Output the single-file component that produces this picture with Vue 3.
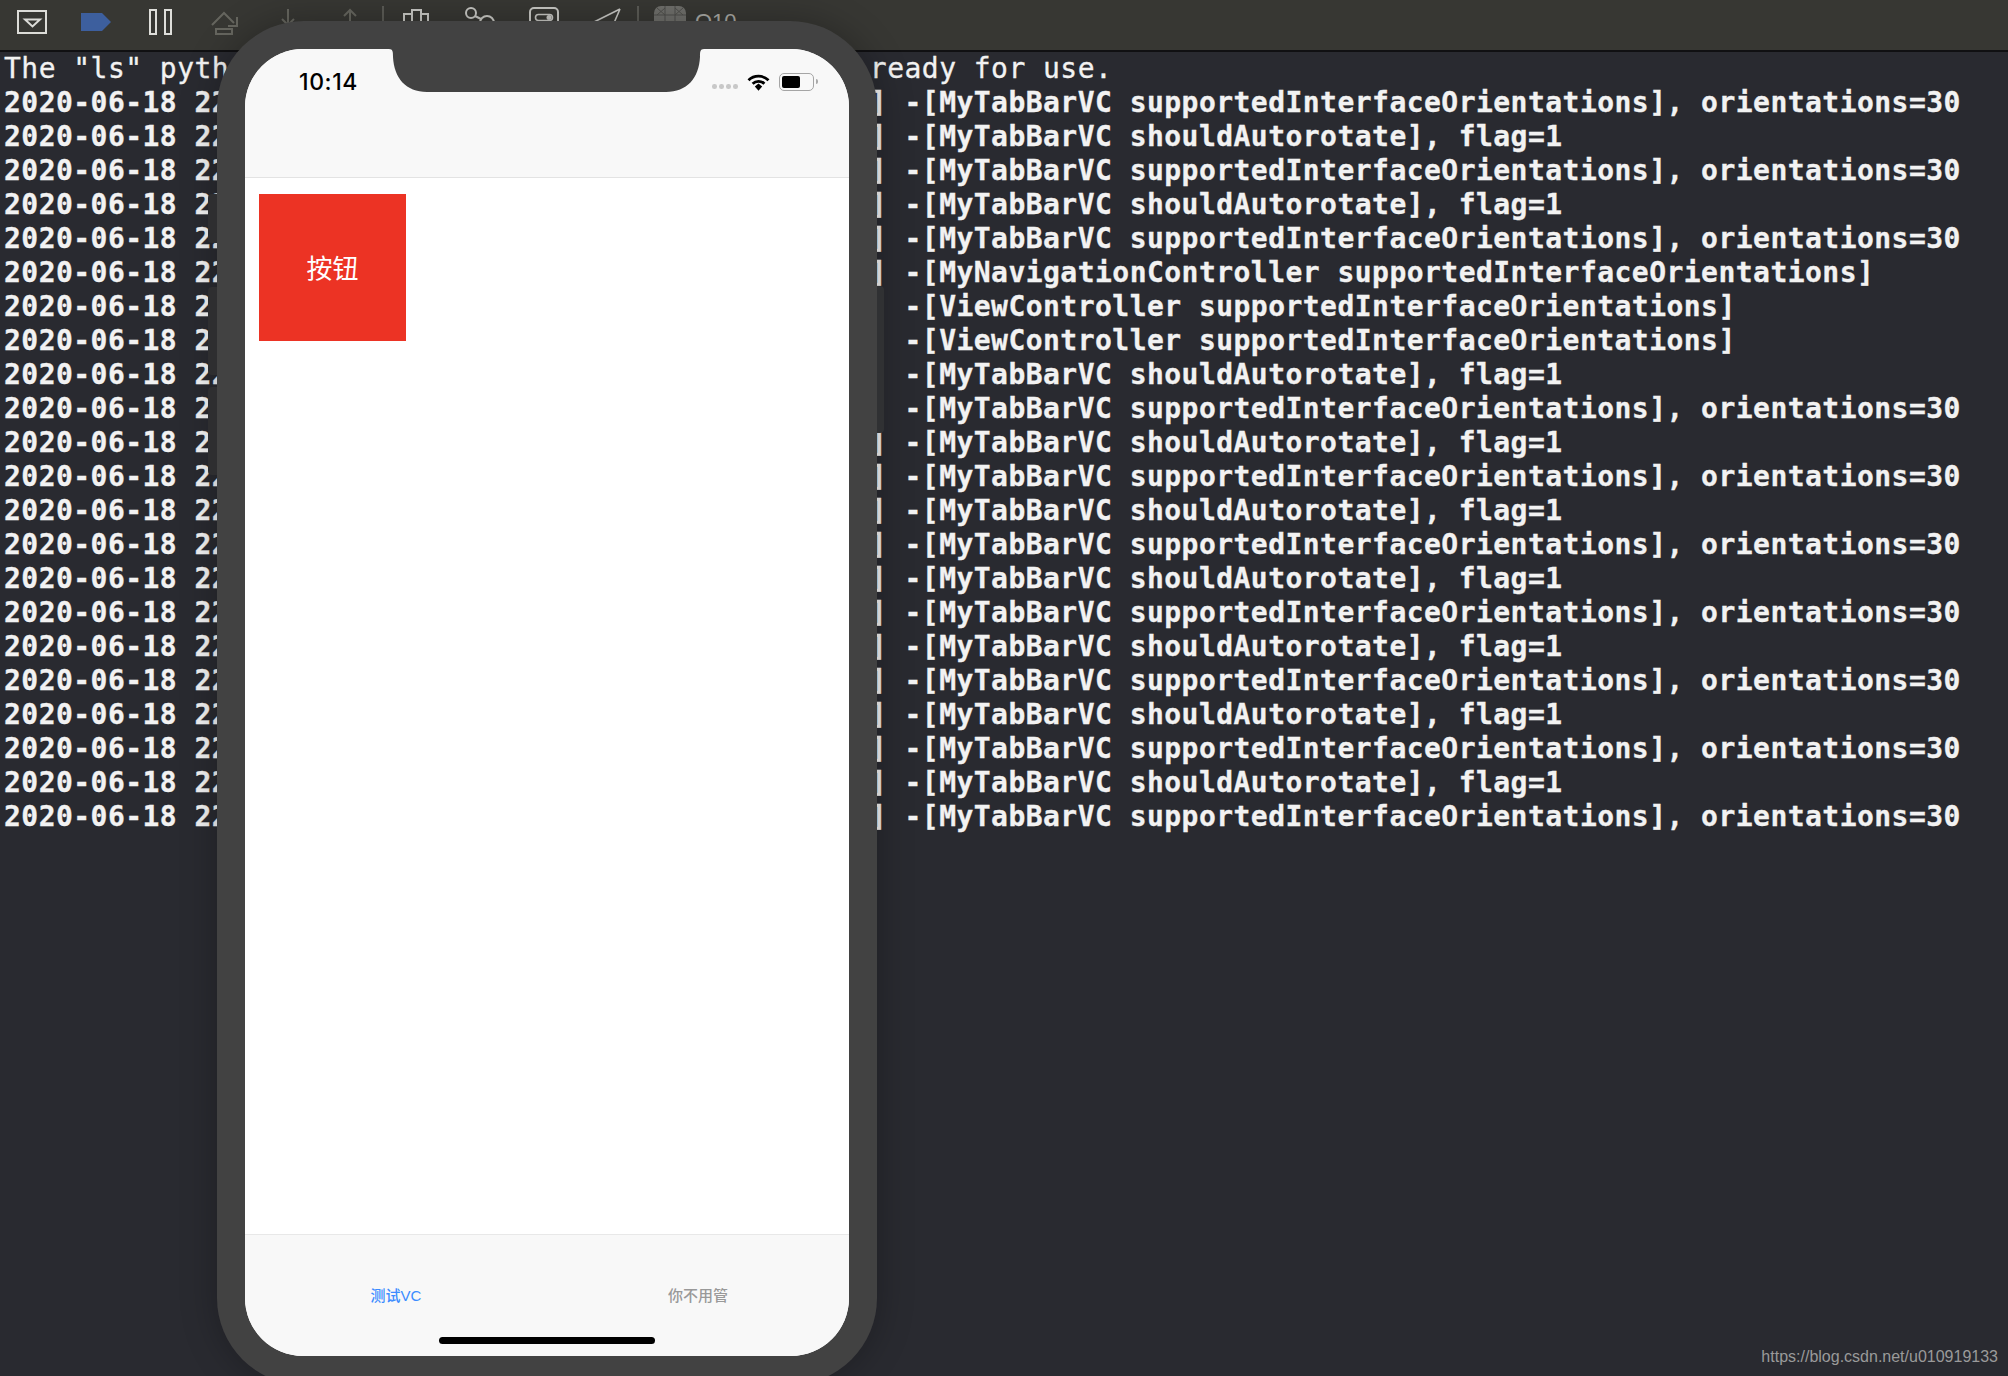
<script setup>
const sup = '-[MyTabBarVC supportedInterfaceOrientations], orientations=30'
const should = '-[MyTabBarVC shouldAutorotate], flag=1'
const nav = '-[MyNavigationController supportedInterfaceOrientations]'
const view = '-[ViewController supportedInterfaceOrientations]'
const messages = [sup, should, sup, should, sup, nav, view, view, should, sup, should, sup, should, sup, should, sup, should, sup, should, sup, should, sup]
const rows = messages.map((m, i) => {
  const micros = String(412873 + i * 1357).padStart(6, '0')
  return `2020-06-18 22:14:08.${micros}+0800 Demo2[27431:945210] ${m}`
})
</script>

<template>
  <div class="page">
    <header class="toolbar">
      <svg class="ic box" width="30" height="50" viewBox="0 0 30 50">
        <rect x="1" y="11" width="28" height="22" fill="none" stroke="#dcdcd8" stroke-width="2" />
        <path d="M8 19.5H23L15.5 26.5Z" fill="none" stroke="#dcdcd8" stroke-width="2" />
      </svg>
      <svg class="ic tag" width="30" height="50" viewBox="0 0 30 50">
        <path d="M0 13H21L30 22L21 31H0Z" fill="#3d5f9e" />
      </svg>
      <svg class="ic pause" width="23" height="50" viewBox="0 0 23 50">
        <rect x="1" y="10" width="6" height="24" fill="none" stroke="#dededa" stroke-width="2" />
        <rect x="16" y="10" width="6" height="24" fill="none" stroke="#dededa" stroke-width="2" />
      </svg>
      <svg class="ic over" width="28" height="50" viewBox="0 0 28 50">
        <path d="M1 25L13 13L23 23M26 17V26H17" fill="none" stroke="#66665f" stroke-width="2" />
        <rect x="5" y="29" width="16" height="5" fill="none" stroke="#66665f" stroke-width="2" />
      </svg>
      <svg class="ic into" width="14" height="50" viewBox="0 0 14 50">
        <path d="M7 9V25M1 19L7 25L13 19" fill="none" stroke="#66665f" stroke-width="2" />
      </svg>
      <svg class="ic out" width="14" height="50" viewBox="0 0 14 50">
        <path d="M7 26V10M1 16L7 10L13 16" fill="none" stroke="#66665f" stroke-width="2" />
      </svg>
      <span class="sep first"></span>
      <svg class="ic views" width="26" height="50" viewBox="0 0 26 50">
        <path d="M1 30V14H9V10H18V14H25V30M9 14V30M18 14V30" fill="none" stroke="#c8c8c4" stroke-width="2" />
      </svg>
      <svg class="ic graph" width="31" height="50" viewBox="0 0 31 50">
        <circle cx="7" cy="13" r="5" fill="none" stroke="#c8c8c4" stroke-width="2" />
        <circle cx="23" cy="23" r="7" fill="none" stroke="#c8c8c4" stroke-width="2" />
        <path d="M11 16L17 19" stroke="#c8c8c4" stroke-width="2" />
      </svg>
      <svg class="ic env" width="30" height="50" viewBox="0 0 30 50">
        <rect x="1" y="8" width="28" height="30" rx="4" fill="none" stroke="#c8c8c4" stroke-width="2" />
        <rect x="6.5" y="14.5" width="17" height="6" rx="3" fill="none" stroke="#c8c8c4" stroke-width="1.6" />
        <circle cx="20" cy="17.5" r="2.5" fill="#c8c8c4" />
      </svg>
      <svg class="ic send" width="30" height="50" viewBox="0 0 30 50">
        <path d="M29 9L1 23M29 9L20 30" fill="none" stroke="#c8c8c4" stroke-width="1.6" />
      </svg>
      <span class="sep second"></span>
      <svg class="ic grid" width="32" height="50" viewBox="0 0 32 50">
        <rect x="0" y="6" width="32" height="30" rx="7" fill="#6f6f6b" />
        <path d="M11 6V36M21 6V36M0 15H32M3 8L11 15M11 8L3 15M21 8L29 15M29 8L21 15" stroke="#4f4f4c" stroke-width="1" fill="none" />
      </svg>
      <span class="code">O10</span>
    </header>

    <main class="console">
      <div class="line plain">The "ls" python command has been installed and is ready for use.</div>
      <div v-for="(row, i) in rows" :key="i" class="line">{{ row }}</div>
    </main>

    <div class="device">
      <span class="hw mute"></span>
      <span class="hw vol-up"></span>
      <span class="hw vol-down"></span>
      <span class="hw power"></span>
      <div class="screen">
        <svg class="notch" width="315" height="43" viewBox="0 0 315 43">
          <path d="M0 0H315C311 0 311 3 311 8C310 29 298 43 277 43H38C17 43 5 29 4 8C4 3 4 0 0 0Z" fill="#424242" />
        </svg>
        <div class="status">
          <span class="time">10:14</span>
          <div class="indicators">
            <div class="signal"><i></i><i></i><i></i><i></i></div>
            <svg width="23" height="17" viewBox="0 0 23 17">
              <path d="M1.5 6.2A14.5 14.5 0 0 1 21.5 6.2" fill="none" stroke="#000" stroke-width="2.8" />
              <path d="M5.6 9.7A8.6 8.6 0 0 1 17.4 9.7" fill="none" stroke="#000" stroke-width="2.8" />
              <path d="M7.8 12.4L11.5 9.6L15.2 12.4L11.5 16.8Z" fill="#000" />
            </svg>
            <div class="battery"><b></b></div>
          </div>
        </div>
        <div class="navbar"></div>
        <div class="content">
          <button class="red-btn" type="button">按钮</button>
        </div>
        <nav class="tabbar">
          <span class="tab active">测试VC</span>
          <span class="tab">你不用管</span>
        </nav>
        <span class="home"></span>
      </div>
    </div>

    <span class="watermark">https://blog.csdn.net/u010919133</span>
  </div>
</template>

<style>
html, body { margin: 0; background: #292a30; overflow: hidden; }
</style>

<style scoped>
.page {
  position: relative;
  width: 2008px;
  height: 1376px;
  overflow: hidden;
  background: #292a30;
  display: flex;
  flex-direction: column;
}
.toolbar {
  flex: none;
  height: 50px;
  box-sizing: content-box;
  border-bottom: 2px solid #101012;
  background: #373733;
  display: flex;
  align-items: flex-start;
  padding-left: 17px;
}
.ic { flex: none; display: block; }
.tag { margin-left: 34px; }
.pause { margin-left: 38px; }
.over { margin-left: 39px; }
.into { margin-left: 42px; }
.out { margin-left: 48px; }
.sep { flex: none; width: 2px; height: 22px; margin-top: 6px; background: #5b5b56; }
.sep.first { margin-left: 25px; }
.views { margin-left: 19px; }
.graph { margin-left: 35px; }
.env { margin-left: 34px; }
.send { margin-left: 32px; }
.sep.second { margin-left: 16px; }
.grid { margin-left: 15px; }
.code {
  margin-left: 9px;
  font: 22px/44px "Liberation Sans", sans-serif;
  color: #a9a9a5;
}
.console {
  flex: 1;
  padding-left: 4px;
  font-family: "DejaVu Sans Mono", monospace;
  font-size: 28px;
  letter-spacing: 0.46px;
  color: #f2f2f2;
}
.line {
  height: 34px;
  line-height: 34px;
  white-space: pre;
  font-weight: 700;
  -webkit-text-stroke: 0.3px #f2f2f2;
}
.line.plain { font-weight: 400; }

.device {
  position: absolute;
  left: 217px;
  top: 21px;
  width: 660px;
  height: 1364px;
  box-sizing: border-box;
  padding: 28px 28px 29px;
  border-radius: 87px;
  background: #424242;
  box-shadow: 0 0 36px rgba(0, 0, 0, 0.28);
}
.hw { position: absolute; background: #2e2e30; }
.mute { left: -9px; top: 173px; width: 9px; height: 49px; border-radius: 4px 0 0 4px; }
.vol-up { left: -9px; top: 266px; width: 9px; height: 88px; border-radius: 4px 0 0 4px; }
.vol-down { left: -9px; top: 366px; width: 9px; height: 88px; border-radius: 4px 0 0 4px; }
.power { right: -7px; top: 265px; width: 7px; height: 147px; border-radius: 0 4px 4px 0; background: #303133; }

.screen {
  position: relative;
  height: 100%;
  border-radius: 58px;
  overflow: hidden;
  background: #fff;
  display: flex;
  flex-direction: column;
}
.notch { position: absolute; left: 144px; top: 0; }
.status {
  position: absolute;
  left: 0;
  right: 0;
  top: 21px;
  height: 24px;
  display: flex;
  align-items: center;
  justify-content: space-between;
  padding: 0 35px 0 54px;
}
.time {
  font: 500 23px/24px Inter, "Liberation Sans", sans-serif;
  letter-spacing: 0.6px;
  color: #000;
}
.indicators { display: flex; align-items: center; gap: 9px; }
.signal { display: flex; gap: 2.5px; margin-top: 9px; }
.signal i { width: 4.6px; height: 4.6px; border-radius: 50%; background: #c8c8c8; }
.battery {
  position: relative;
  box-sizing: border-box;
  width: 35px;
  height: 18px;
  padding: 2px;
  border: 1.5px solid #a5a5a5;
  border-radius: 5px;
}
.battery b { display: block; width: 18px; height: 100%; border-radius: 2px; background: #000; }
.battery::after {
  content: "";
  position: absolute;
  right: -5px;
  top: 5px;
  width: 2px;
  height: 5px;
  background: #aaa;
  border-radius: 0 2px 2px 0;
}
.navbar {
  flex: none;
  height: 128px;
  background: #f8f8f8;
  border-bottom: 1px solid #e3e3e3;
}
.content { flex: 1; padding: 16px 0 0 14px; background: #fff; }
.red-btn {
  display: block;
  width: 147px;
  height: 147px;
  padding: 0 0 2px;
  border: 0;
  background: #ec3324;
  color: #fff;
  font: 400 26px/1 "Noto Sans CJK SC", sans-serif;
}
.tabbar {
  flex: none;
  height: 121px;
  background: #f8f8f8;
  border-top: 1px solid #e8e8e8;
  display: grid;
  grid-template-columns: 1fr 1fr;
  align-items: center;
  justify-items: center;
}
.tab {
  font: 500 15px/1 "Liberation Sans", "Noto Sans CJK SC", sans-serif;
  color: #999;
}
.tab.active { color: #3c8cff; }
.home {
  position: absolute;
  left: 194px;
  bottom: 12px;
  width: 216px;
  height: 7px;
  border-radius: 4px;
  background: #000;
}
.watermark {
  position: absolute;
  right: 10px;
  top: 1347px;
  font: 16px/20px "Liberation Sans", sans-serif;
  color: #9a9a9a;
}
</style>
